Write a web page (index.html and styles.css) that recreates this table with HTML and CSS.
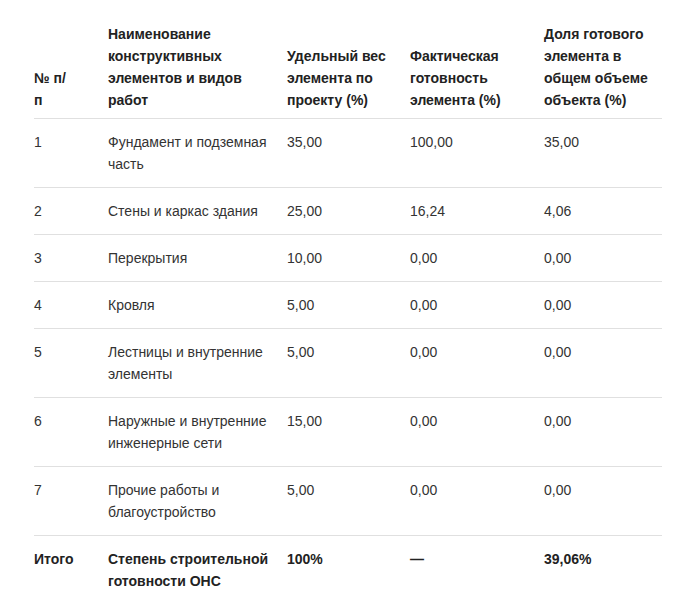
FILE: index.html
```html
<!DOCTYPE html>
<html lang="ru">
<head>
<meta charset="utf-8">
<title>Степень строительной готовности</title>
<link rel="stylesheet" href="styles.css">
</head>
<body>
<div class="wrap">
<table class="readiness">
  <colgroup>
    <col class="c-num">
    <col class="c-name">
    <col class="c-weight">
    <col class="c-fact">
    <col class="c-share">
  </colgroup>
  <thead>
    <tr>
      <th>№ п/<br>п</th>
      <th>Наименование конструктивных элементов и видов работ</th>
      <th>Удельный вес элемента по проекту (%)</th>
      <th>Фактическая готовность элемента (%)</th>
      <th>Доля готового элемента в общем объеме объекта (%)</th>
    </tr>
  </thead>
  <tbody>
    <tr><td>1</td><td>Фундамент и подземная часть</td><td>35,00</td><td>100,00</td><td>35,00</td></tr>
    <tr><td>2</td><td>Стены и каркас здания</td><td>25,00</td><td>16,24</td><td>4,06</td></tr>
    <tr><td>3</td><td>Перекрытия</td><td>10,00</td><td>0,00</td><td>0,00</td></tr>
    <tr><td>4</td><td>Кровля</td><td>5,00</td><td>0,00</td><td>0,00</td></tr>
    <tr><td>5</td><td>Лестницы и внутренние элементы</td><td>5,00</td><td>0,00</td><td>0,00</td></tr>
    <tr><td>6</td><td>Наружные и внутренние инженерные сети</td><td>15,00</td><td>0,00</td><td>0,00</td></tr>
    <tr><td>7</td><td>Прочие работы и благоустройство</td><td>5,00</td><td>0,00</td><td>0,00</td></tr>
    <tr class="total"><td>Итого</td><td>Степень строительной готовности ОНС</td><td>100%</td><td>—</td><td>39,06%</td></tr>
  </tbody>
</table>
</div>
</body>
</html>
```

FILE: styles.css
```css
html, body {
  margin: 0;
  padding: 0;
  background: #ffffff;
}

body {
  font-family: "Liberation Sans", Arial, sans-serif;
  font-size: 14px;
  line-height: 22px;
  color: #333333;
}

.wrap {
  padding: 11px 26px 0 34px;
}

.readiness {
  width: 628px;
  border-collapse: collapse;
  table-layout: fixed;
}

.c-num { width: 74px; }
.c-name { width: 179px; }
.c-weight { width: 123px; }
.c-fact { width: 134px; }
.c-share { width: 118px; }

.readiness th,
.readiness td {
  text-align: left;
  padding: 12px 14px 12px 0;
  border-bottom: 1px solid #e0e0e0;
}

.readiness th:last-child,
.readiness td:last-child {
  padding-right: 0;
}

.readiness th {
  font-weight: bold;
  color: #222222;
  vertical-align: bottom;
  padding-bottom: 7px;
}

.readiness td {
  vertical-align: top;
}

.readiness tr.total td {
  font-weight: bold;
  color: #222222;
  border-bottom: none;
}
```
